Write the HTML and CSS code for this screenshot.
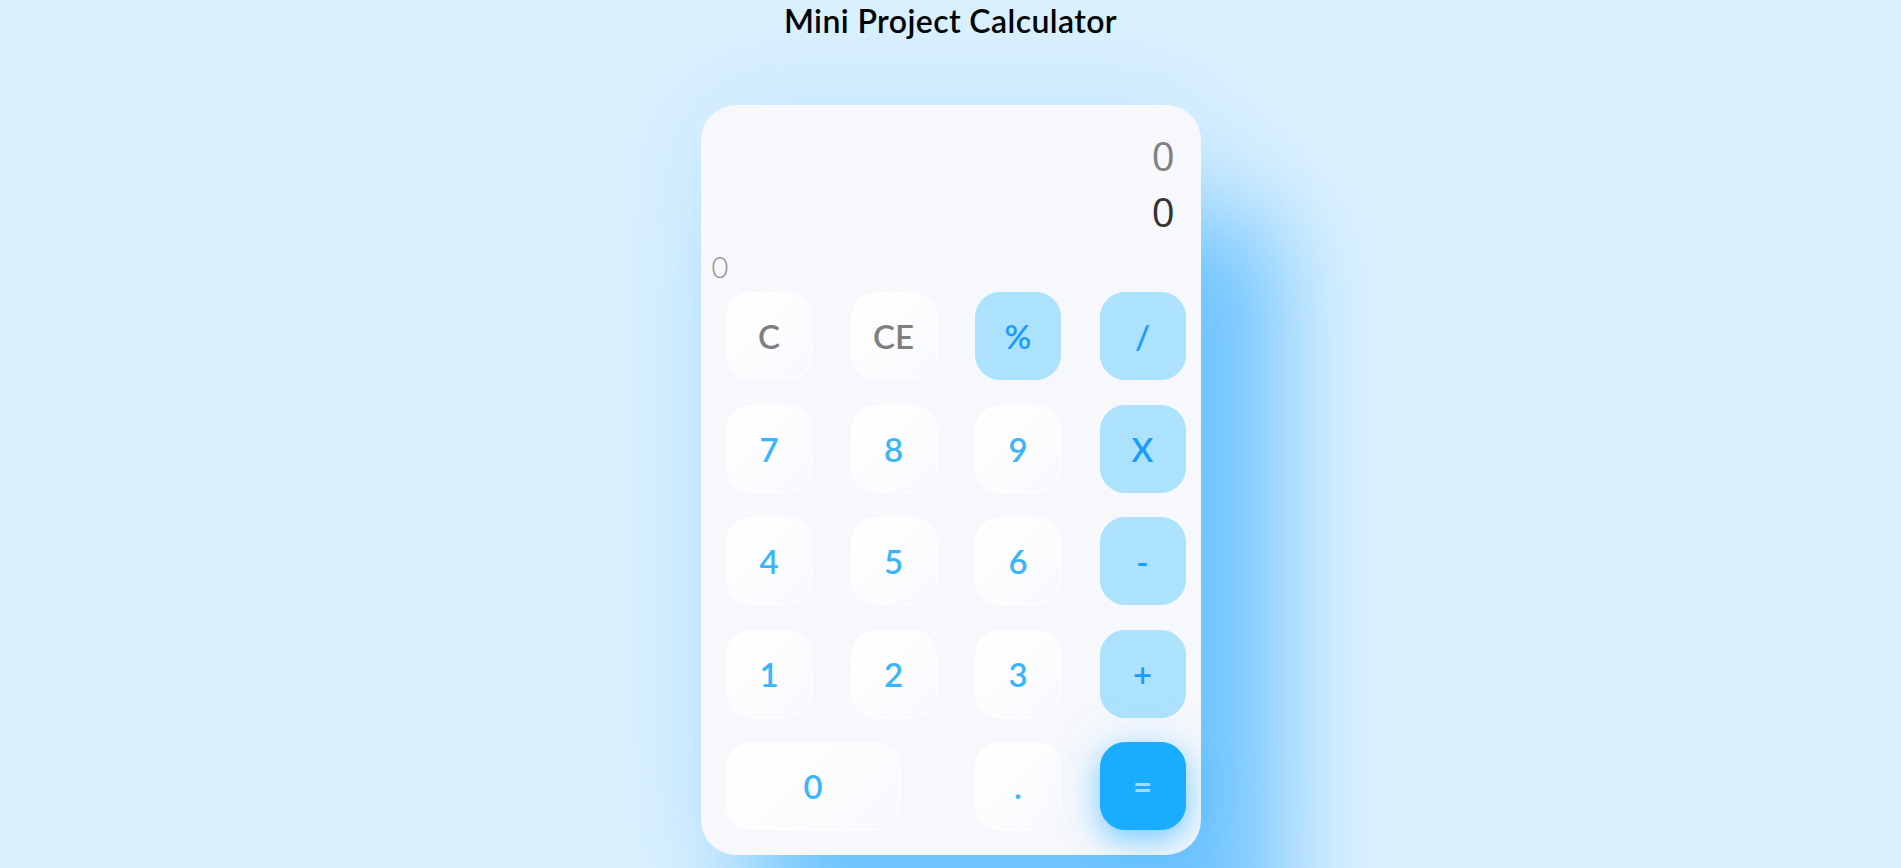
FILE: index.html
```html
<!DOCTYPE html>
<html lang="en">
<head>
<meta charset="utf-8">
<title>Mini Project Calculator</title>
<link rel="stylesheet" href="styles.css">
</head>
<body>
  <h1 class="title">Mini Project Calculator</h1>
  <div class="calculator">
    <div class="display">
      <div class="line prev">0</div>
      <div class="line current">0</div>
      <div class="line memory">0</div>
    </div>
    <div class="keys">
      <button class="key fn">C</button>
      <button class="key fn">CE</button>
      <button class="key op">%</button>
      <button class="key op">/</button>
      <button class="key num">7</button>
      <button class="key num">8</button>
      <button class="key num">9</button>
      <button class="key op">X</button>
      <button class="key num">4</button>
      <button class="key num">5</button>
      <button class="key num">6</button>
      <button class="key op">-</button>
      <button class="key num">1</button>
      <button class="key num">2</button>
      <button class="key num">3</button>
      <button class="key op">+</button>
      <button class="key num zero">0</button>
      <button class="key num">.</button>
      <button class="key eq">=</button>
    </div>
  </div>
</body>
</html>
```

FILE: styles.css
```css
html, body {
  margin: 0;
  padding: 0;
}
body {
  background: #daf0fe;
  font-family: "Lato", "Noto Sans", sans-serif;
  display: flex;
  flex-direction: column;
  align-items: center;
  height: 868px;
  overflow: hidden;
}
.title {
  margin: 0;
  padding-top: 1px;
  font-size: 32px;
  font-weight: 600;
  line-height: 40px;
  color: #000;
  letter-spacing: 0.4px;
}
.calculator {
  margin-top: 64px;
  width: 500px;
  height: 750px;
  box-sizing: border-box;
  background: #f6f8fc;
  border-radius: 35px;
  padding: 23px 26px 25px 11px;
  box-shadow: 70px 120px 100px 10px #6ec4ff, 0 0 110px rgba(110, 196, 255, 0.22);
  display: flex;
  flex-direction: column;
}
.display {
  display: flex;
  flex-direction: column;
  font-family: "Open Sans", sans-serif;
}
.line {
  text-align: right;
}
.prev {
  font-size: 40px;
  line-height: 56px;
  color: #808080;
}
.current {
  font-size: 40px;
  line-height: 56px;
  color: #333;
}
.memory {
  margin-top: 10px;
  margin-bottom: 8px;
  text-align: left;
  font-family: "Lato", sans-serif;
  font-weight: 300;
  font-size: 29px;
  line-height: 34px;
  color: #8f8f8f;
}
.keys {
  margin-left: 14.5px;
  display: grid;
  grid-template-columns: repeat(4, 86px);
  grid-auto-rows: 88px;
  column-gap: 38.5px;
  row-gap: 24.5px;
}
.key {
  border: 1px solid rgba(255, 255, 255, 0.9);
  border-radius: 25px;
  font-family: "Lato", "Noto Sans", sans-serif;
  font-size: 33px;
  font-weight: 600;
  padding: 0;
  background: linear-gradient(135deg, #ffffff, #f8f9fd);
  color: #3bb5f9;
  cursor: pointer;
}
.fn {
  color: #7f7f7f;
}
.op {
  background: #ade2fd;
  border-color: #ade2fd;
  color: #1a9cff;
}
.zero {
  grid-column: span 2;
  width: 174px;
}
.eq {
  background: #1aacff;
  border-color: #1aacff;
  color: rgba(255, 255, 255, 0.6);
  font-weight: 700;
  box-shadow: 0 10px 30px rgba(26, 172, 255, 0.55), 0 0 70px rgba(26, 172, 255, 0.08);
}
```
